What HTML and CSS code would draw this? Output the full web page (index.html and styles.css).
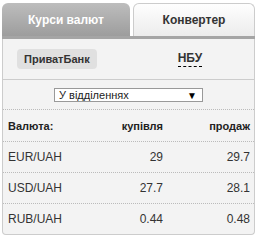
FILE: index.html
```html
<!DOCTYPE html>
<html lang="uk">
<head>
  <meta charset="UTF-8" />
  <meta name="viewport" content="width=device-width, initial-scale=1.0" />
  <title>Курси валют</title>
  <link rel="stylesheet" href="styles.css">
</head>
<body>
  <div class="widget">
    <div class="tabs">
      <div class="tab active">Курси валют</div>
      <div class="tab">Конвертер</div>
    </div>
    <div class="panel">
      <div class="banks">
        <span class="bank selected">ПриватБанк</span>
        <span class="bank link">НБУ</span>
      </div>
      <div class="filter">
        <div class="select">
          <span>У відділеннях</span>
          <span class="arrow">&#9660;</span>
        </div>
      </div>
      <div class="rates">
        <div class="row head">
          <span>Валюта:</span>
          <span class="num">купівля</span>
          <span class="num">продаж</span>
        </div>
        <div class="row">
          <span>EUR/UAH</span>
          <span class="num">29</span>
          <span class="num">29.7</span>
        </div>
        <div class="row">
          <span>USD/UAH</span>
          <span class="num">27.7</span>
          <span class="num">28.1</span>
        </div>
        <div class="row last">
          <span>RUB/UAH</span>
          <span class="num">0.44</span>
          <span class="num">0.48</span>
        </div>
      </div>
    </div>
  </div>
</body>
</html>
```

FILE: styles.css
```css
body {
  margin: 0;
  background: #fff;
  font-family: "Liberation Sans", Arial, sans-serif;
  color: #333;
}
.widget {
  width: 253px;
  margin: 3px 0 0 2px;
}
.tabs {
  display: flex;
  gap: 3px;
  border-bottom: 3px solid #a5a5a5;
}
.tab {
  height: 33px;
  box-sizing: border-box;
  display: flex;
  align-items: center;
  justify-content: center;
  font-size: 12px;
  font-weight: bold;
  border-radius: 6px 6px 0 0;
}
.tab.active {
  width: 128px;
  color: #fff;
  background: linear-gradient(#bdbdbd, #9d9d9d);
}
.tab:not(.active) {
  flex: 1;
  color: #333;
  border: 1px solid #ccc;
  border-bottom: none;
  background: linear-gradient(#fefefe, #ececec);
}
.panel {
  border: 1px solid #ccc;
  border-top: none;
  border-radius: 0 0 4px 4px;
  background: #f3f3f3;
}
.banks {
  display: flex;
  align-items: center;
  gap: 81px;
  height: 40px;
  padding: 0 14px;
  border-bottom: 1px solid #ccc;
}
.bank {
  font-size: 11px;
  font-weight: bold;
  color: #333;
}
.bank.selected {
  height: 20px;
  line-height: 20px;
  padding: 0 7px;
  border-radius: 4px;
  background: #e0e0e0;
}
.bank.link {
  padding-bottom: 1px;
  border-bottom: 1px dashed #000;
  font-size: 12px;
}
.filter {
  display: flex;
  justify-content: center;
  padding: 8px 0 7px;
  border-bottom: 1px dotted #bbb;
}
.select {
  width: 149px;
  height: 14px;
  box-sizing: border-box;
  display: flex;
  align-items: center;
  justify-content: space-between;
  padding: 0 5px 0 4px;
  border: 1px solid #999;
  background: #fff;
  font-size: 11px;
  color: #222;
}
.arrow {
  font-size: 10px;
  color: #000;
}
.row {
  display: grid;
  grid-template-columns: 1fr 80px 87px;
  align-items: center;
  height: 30px;
  padding: 0 4px 0 5px;
  border-bottom: 1px dotted #bbb;
  font-size: 12px;
  color: #333;
}
.row.head {
  height: 31px;
  font-size: 11px;
  font-weight: bold;
  color: #222;
}
.row.last {
  border-bottom: none;
}
.num {
  text-align: right;
}
```
